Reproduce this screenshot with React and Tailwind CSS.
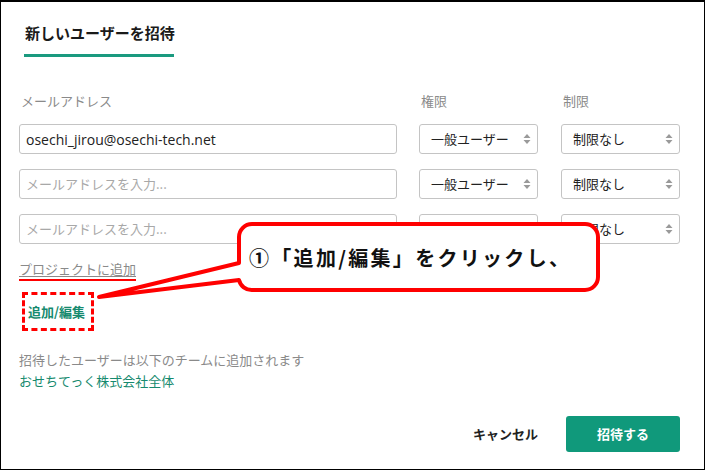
import React from "react";

const jp = { fontFamily: '"Noto Sans CJK JP", "Noto Sans", sans-serif' };

function Arrows() {
  return (
    <svg width="8" height="12" viewBox="0 0 8 12" className="shrink-0">
      <path d="M4 1 L7.5 5 H0.5 Z" fill="#9a9a9a" />
      <path d="M4 11 L7.5 7 H0.5 Z" fill="#9a9a9a" />
    </svg>
  );
}

function Select({ value }) {
  return (
    <div className="w-[119px] h-[30px] border border-[#c4c4c4] rounded-[3px] flex items-center justify-between pl-[11px] pr-[6px] text-[13px] text-[#222]">
      <span>{value}</span>
      <Arrows />
    </div>
  );
}

function Row({ email }) {
  return (
    <div className="flex items-center h-[30px]">
      <div className="w-[378px] h-[30px] border border-[#c4c4c4] rounded-[3px] flex items-center pl-[6px]">
        {email ? (
          <span className="text-[14px] text-[#222]" style={{ fontFamily: '"Open Sans", sans-serif' }}>{email}</span>
        ) : (
          <span className="text-[13px] text-[#a8a8a8]">メールアドレスを入力...</span>
        )}
      </div>
      <div className="ml-[22px]"><Select value="一般ユーザー" /></div>
      <div className="ml-[23px]"><Select value="制限なし" /></div>
    </div>
  );
}

export default function App() {
  return (
    <div className="relative w-[705px] h-[470px] bg-white border border-black border-t-2 overflow-hidden" style={jp}>
      <div className="pl-[18px] pt-[18px]">
        <div className="ml-[5px] inline-flex flex-col">
          <div className="text-[15px] font-bold text-[#1a1a1a] leading-[20px] px-[1px]">新しいユーザーを招待</div>
          <div className="mt-[11px] h-[3px] w-[150px] bg-[#1a9a7f]" />
        </div>

        <div className="mt-[36px] flex text-[13px] text-[#8a8a8a] leading-[16px]">
          <div className="w-[400px] pl-[2px]">メールアドレス</div>
          <div className="w-[142px] pl-[2px]">権限</div>
          <div className="pl-[2px]">制限</div>
        </div>

        <div className="mt-[15px] flex flex-col gap-[15px]">
          <Row email="osechi_jirou@osechi-tech.net" />
          <Row />
          <Row />
        </div>

        <div className="mt-[11px] inline-block border-b-2 border-[#ff0000]">
          <span className="text-[13px] text-[#8a8a8a] underline underline-offset-2 decoration-[#8a8a8a] leading-[16px]">プロジェクトに追加</span>
        </div>

        <div className="mt-[11px] ml-[3px] w-[72px] h-[39px] border-[3px] border-dashed border-[#ff0000] flex items-center pl-[3px]">
          <span className="text-[13px] font-bold text-[#168a6e]">追加/編集</span>
        </div>

        <div className="mt-[21px] text-[13px] text-[#8a8a8a] leading-[16px]">招待したユーザーは以下のチームに追加されます</div>
        <div className="mt-[5px] text-[13px] text-[#168a6e] leading-[16px]">おせちてっく株式会社全体</div>
      </div>

      <div className="absolute right-[24px] bottom-[17px] flex items-center">
        <span className="text-[13px] font-bold text-[#222] mr-[28px]">キャンセル</span>
        <div className="w-[114px] h-[36px] bg-[#10997b] rounded-[3px] flex items-center justify-center text-[13px] font-bold text-white">招待する</div>
      </div>

      <svg className="absolute left-[-1px] top-[-2px] pointer-events-none" width="705" height="470" viewBox="0 0 705 470">
        <path
          d="M252 224 H585 A13 13 0 0 1 598 237 V277 A13 13 0 0 1 585 290 H252 A13 13 0 0 1 239 280 L99 297 L239 263 V237 A13 13 0 0 1 252 224 Z"
          fill="white"
          stroke="#ff0000"
          strokeWidth="4"
          strokeLinejoin="round"
        />
      </svg>
      <div className="absolute left-[248px] top-[243px] text-[20px] font-bold text-[#111] leading-[26px] tracking-[2.3px] whitespace-nowrap">
        ①「追加/編集」をクリックし、
      </div>
    </div>
  );
}
